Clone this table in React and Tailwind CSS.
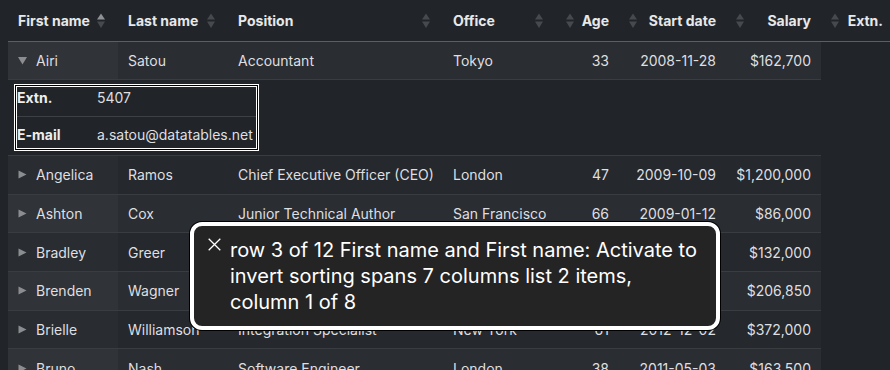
import React from 'react';

const columns = [
    { label: 'First name', width: 'w-[110px]', numeric: false, active: true },
    { label: 'Last name', width: 'w-[110px]', numeric: false },
    { label: 'Position', width: 'w-[215px]', numeric: false },
    { label: 'Office', width: 'w-[113px]', numeric: false },
    { label: 'Age', width: 'w-[63px]', numeric: true },
    { label: 'Start date', width: 'w-[107px]', numeric: true },
    { label: 'Salary', width: 'w-[95px]', numeric: true },
    { label: 'Extn.', width: 'w-[72px]', numeric: true },
];

const rows = [
    ['Airi', 'Satou', 'Accountant', 'Tokyo', '33', '2008-11-28', '$162,700'],
    ['Angelica', 'Ramos', 'Chief Executive Officer (CEO)', 'London', '47', '2009-10-09', '$1,200,000'],
    ['Ashton', 'Cox', 'Junior Technical Author', 'San Francisco', '66', '2009-01-12', '$86,000'],
    ['Bradley', 'Greer', 'Software Engineer', 'London', '41', '2012-10-13', '$132,000'],
    ['Brenden', 'Wagner', 'Software Engineer', 'San Francisco', '28', '2011-06-07', '$206,850'],
    ['Brielle', 'Williamson', 'Integration Specialist', 'New York', '61', '2012-12-02', '$372,000'],
    ['Bruno', 'Nash', 'Software Engineer', 'London', '38', '2011-05-03', '$163,500'],
];

const SortIcon = ({ active }) => (
    <svg width="8" height="16" viewBox="0 0 8 16" className="block">
        <path d="M4 0.5L8 6.5H0Z" fill={active ? '#8f9195' : '#46494d'} />
        <path d="M0 8.5H8L4 15Z" fill="#46494d" />
    </svg>
);

const Toggle = ({ open }) => (
    <svg width="9" height="9" viewBox="0 0 9 9" className="mr-[9px] shrink-0">
        {open
            ? <path d="M0 1H9L4.5 8.5Z" fill="#8b8d90" />
            : <path d="M0.5 0.5L8.5 4.5L0.5 8.5Z" fill="#8b8d90" />}
    </svg>
);

const HeaderRow = () => (
    <div className="flex w-[885px] h-[42px] border-b border-[#5b5e62] font-bold text-[#e7e8e9]">
        {columns.map((col) => (
            <div
                key={col.label}
                className={`relative ${col.width} shrink-0 h-full flex items-center px-[10px] ${col.numeric ? 'justify-end' : 'justify-start'}`}
            >
                <span className="whitespace-nowrap">{col.label}</span>
                <span className={`absolute top-1/2 -translate-y-1/2 ${col.numeric ? 'left-[10px]' : 'right-[13px]'}`}>
                    <SortIcon active={col.active} />
                </span>
            </div>
        ))}
    </div>
);

const DataRow = ({ row, index, open }) => {
    const striped = index % 2 === 0;
    return (
        <div
            className={`flex ${index === 0 ? 'h-[38px]' : 'h-[38.66px]'} border-b border-[#393c40] ${striped ? 'bg-[#2a2d31]' : 'bg-[#25282c]'}`}
        >
            {row.map((cell, i) => (
                <div
                    key={i}
                    className={`${columns[i].width} shrink-0 h-full flex items-center px-[10px] whitespace-nowrap ${columns[i].numeric ? 'justify-end' : 'justify-start'} ${i === 0 ? (striped ? 'bg-[#303337]' : 'bg-[#292c30]') : ''}`}
                >
                    {i === 0 && <Toggle open={open} />}
                    {cell}
                </div>
            ))}
        </div>
    );
};

const ChildRow = () => (
    <div className="h-[76px] border-b border-[#393c40] pl-[6px] pt-1">
        <div className="w-[245px] h-[67px] border border-white bg-black p-px">
            <div className="h-full border border-white bg-[#212529]">
                <div className="flex pb-[7px] border-b border-[#3d4044] leading-[22px]">
                    <span className="w-[80px] font-bold text-[#eeeeee]">Extn.</span>
                    <span>5407</span>
                </div>
                <div className="flex pt-[7px] leading-[22px]">
                    <span className="w-[80px] font-bold text-[#eeeeee]">E-mail</span>
                    <span>a.satou@datatables.net</span>
                </div>
            </div>
        </div>
    </div>
);

const Caption = () => (
    <div className="absolute left-[190px] top-[222px] w-[530px] h-[108px] rounded-[12px] border-4 border-white bg-[#242424] shadow-[0_0_0_1px_#000] flex items-start pl-[14px] pt-[11px]">
        <svg width="13" height="13" viewBox="0 0 13 13" className="mt-[1px] shrink-0">
            <path d="M0.7 0.7L12.3 12.3M12.3 0.7L0.7 12.3" stroke="#ffffff" strokeWidth="1.3" />
        </svg>
        <p className="ml-[9px] text-[20px] leading-[26px] text-white whitespace-nowrap">
            row 3 of 12 First name and First name: Activate to<br />
            invert sorting spans 7 columns list 2 items,<br />
            column 1 of 8
        </p>
    </div>
);

export default function App() {
    return (
        <div className="relative w-[890px] h-[370px] overflow-hidden bg-[#212529] text-[14px] text-[#dedfe0] font-['Inter','Liberation_Sans',sans-serif]">
            <div className="pl-2">
                <HeaderRow />
                <div className="w-[813px]">
                    <DataRow row={rows[0]} index={0} open />
                    <ChildRow />
                    {rows.slice(1).map((row, i) => (
                        <DataRow key={row[0]} row={row} index={i + 1} />
                    ))}
                </div>
            </div>
            <Caption />
        </div>
    );
}
